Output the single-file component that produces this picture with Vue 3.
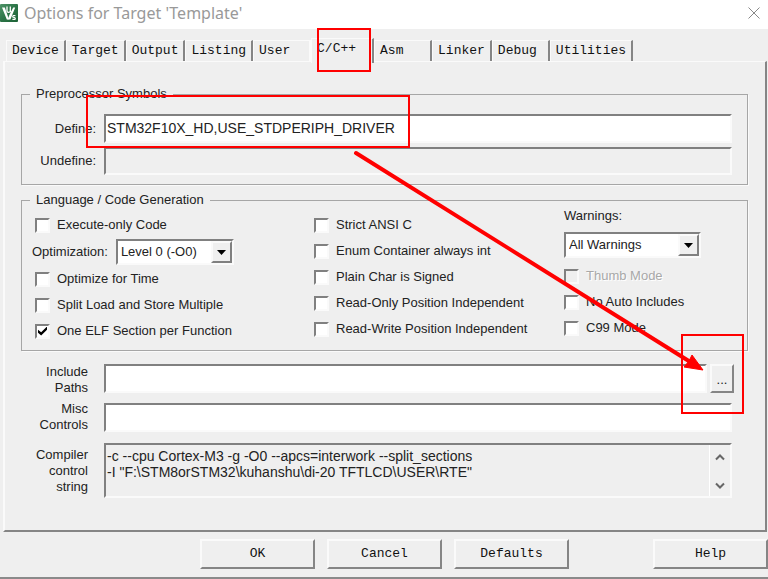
<script setup>
import { ref, reactive } from 'vue'

const tabs = ['Device', 'Target', 'Output', 'Listing', 'User', 'C/C++', 'Asm', 'Linker', 'Debug', 'Utilities']
const active = ref('C/C++')

const defines = ref('STM32F10X_HD,USE_STDPERIPH_DRIVER')
const undefines = ref('')
const optimization = ref('Level 0 (-O0)')
const warnings = ref('All Warnings')
const includePaths = ref('')
const misc = ref('')
const controlString =
  '-c --cpu Cortex-M3 -g -O0 --apcs=interwork --split_sections\n-I "F:\\STM8orSTM32\\kuhanshu\\di-20 TFTLCD\\USER\\RTE"'

const executeOnly = reactive({ label: 'Execute-only Code', on: false })
const codeFlags = reactive([
  { label: 'Optimize for Time', on: false },
  { label: 'Split Load and Store Multiple', on: false },
  { label: 'One ELF Section per Function', on: true },
])
const languageFlags = reactive([
  { label: 'Strict ANSI C', on: false },
  { label: 'Enum Container always int', on: false },
  { label: 'Plain Char is Signed', on: false },
  { label: 'Read-Only Position Independent', on: false },
  { label: 'Read-Write Position Independent', on: false },
])
const modeFlags = reactive([
  { label: 'Thumb Mode', on: false, disabled: true },
  { label: 'No Auto Includes', on: false },
  { label: 'C99 Mode', on: false },
])
</script>

<template>
  <div class="window">
    <header class="titlebar">
      <svg class="logo" viewBox="0 0 18 18" aria-hidden="true">
        <defs>
          <linearGradient id="logo-fill" x1="0" y1="0" x2="1" y2="1">
            <stop offset="0" stop-color="#4f9468" />
            <stop offset="0.5" stop-color="#2c7447" />
            <stop offset="1" stop-color="#1d6236" />
          </linearGradient>
        </defs>
        <rect width="18" height="18" rx="1" fill="url(#logo-fill)" />
        <path d="M2 3.5H4.8L7.6 11.5L8.6 15.5H6.8Z" fill="#fff" />
        <path d="M13.2 3.5H15.2L10.4 15.5H7.6L9.4 11Z" fill="#fff" />
        <path d="M7 2.5V7.2Q7.2 8.4 8.8 8.3Q10.2 8.2 10.3 7V2.5M10.3 6.8L11.2 8" fill="none" stroke="#fff" stroke-width="1.3" />
        <path d="M15.4 11.7H13.2Q12.2 12.7 13.3 13.3L14.8 13.8Q15.8 14.6 14.7 15.4H12.4" fill="none" stroke="#fff" stroke-width="1.2" />
      </svg>
      <h1>Options for Target 'Template'</h1>
      <button class="close" type="button" aria-label="Close">
        <svg viewBox="0 0 12 12"><path d="M0.5 0.5L11.5 11.5M11.5 0.5L0.5 11.5" /></svg>
      </button>
    </header>

    <nav class="tabs" role="tablist">
      <button
        v-for="tab in tabs"
        :key="tab"
        type="button"
        role="tab"
        class="tab"
        :class="{ active: tab === active }"
        :aria-selected="tab === active"
        @click="active = tab"
      >{{ tab }}</button>
    </nav>

    <main class="panel">
      <fieldset class="symbols">
        <legend>Preprocessor Symbols</legend>
        <div class="field">
          <label for="define">Define:</label>
          <input id="define" v-model="defines" class="text" type="text" spellcheck="false" />
        </div>
        <div class="field">
          <label for="undefine">Undefine:</label>
          <input id="undefine" v-model="undefines" class="text muted" type="text" />
        </div>
      </fieldset>

      <fieldset class="codegen">
        <legend>Language / Code Generation</legend>
        <div class="columns">
          <div class="column first">
            <label class="check"><input v-model="executeOnly.on" type="checkbox" />{{ executeOnly.label }}</label>
            <div class="optimization">
              <label for="optimization">Optimization:</label>
              <div class="select level">
                <select id="optimization" v-model="optimization">
                  <option>Level 0 (-O0)</option>
                </select>
                <span class="drop"><svg viewBox="0 0 9 5"><path d="M0 0H9L4.5 5Z" /></svg></span>
              </div>
            </div>
            <label v-for="flag in codeFlags" :key="flag.label" class="check">
              <input v-model="flag.on" type="checkbox" />{{ flag.label }}
            </label>
          </div>

          <div class="column">
            <label v-for="flag in languageFlags" :key="flag.label" class="check">
              <input v-model="flag.on" type="checkbox" />{{ flag.label }}
            </label>
          </div>

          <div class="column last">
            <label for="warnings">Warnings:</label>
            <div class="select warn">
              <select id="warnings" v-model="warnings">
                <option>All Warnings</option>
              </select>
              <span class="drop"><svg viewBox="0 0 9 5"><path d="M0 0H9L4.5 5Z" /></svg></span>
            </div>
            <label v-for="flag in modeFlags" :key="flag.label" class="check" :class="{ disabled: flag.disabled }">
              <input v-model="flag.on" type="checkbox" :disabled="flag.disabled" />{{ flag.label }}
            </label>
          </div>
        </div>
      </fieldset>

      <div class="setting paths">
        <label for="include">Include<br />Paths</label>
        <div class="picker">
          <input id="include" v-model="includePaths" class="text" type="text" />
          <button class="browse" type="button">...</button>
        </div>
      </div>
      <div class="setting">
        <label for="misc">Misc<br />Controls</label>
        <input id="misc" v-model="misc" class="text" type="text" />
      </div>
      <div class="setting compiler">
        <label for="control">Compiler<br />control<br />string</label>
        <div class="output">
          <textarea id="control" readonly spellcheck="false" :value="controlString"></textarea>
          <div class="scroll">
            <button type="button" aria-label="Scroll up"><svg viewBox="0 0 10 8"><path d="M1 6.5L5 2.5L9 6.5" /></svg></button>
            <button type="button" aria-label="Scroll down"><svg viewBox="0 0 10 8"><path d="M1 1.5L5 5.5L9 1.5" /></svg></button>
          </div>
        </div>
      </div>
    </main>

    <footer class="actions">
      <button type="button">OK</button>
      <button type="button">Cancel</button>
      <button type="button">Defaults</button>
      <button type="button" class="help">Help</button>
    </footer>

    <svg class="marks" width="768" height="579" viewBox="0 0 768 579" aria-hidden="true">
      <rect x="318" y="29" width="52" height="42" />
      <rect x="87" y="96" width="322" height="51" />
      <rect x="682" y="335" width="61" height="78" />
      <path class="shaft" d="M356 153L692 363" />
      <path class="head" d="M703 370L692 355L689 361L684 367Z" />
    </svg>
  </div>
</template>

<style>
body {
  margin: 0;
  background: #efefef;
}
</style>

<style scoped>
* {
  box-sizing: border-box;
}

.window {
  position: relative;
  overflow: hidden;
  background: #efefef;
  border-bottom: 2px solid #8a8a8a;
  color: #222;
  font: 13px/16px "Liberation Sans", Arial, sans-serif;
}

button,
input,
select,
textarea {
  margin: 0;
  padding: 0;
  border: 0;
  border-radius: 0;
  background: none;
  color: inherit;
  font: inherit;
}

.titlebar {
  display: flex;
  align-items: center;
  height: 29px;
  padding: 0 8px 4px 0;
  background: #fff;
}

.logo {
  width: 18px;
  height: 18px;
}

h1 {
  flex: 1;
  margin: 0 0 0 6px;
  color: #999;
  font: 16px/24px "Noto Sans", sans-serif;
}

.close {
  display: flex;
}

.close svg {
  width: 12px;
  height: 12px;
  fill: none;
  stroke: #888;
}

.tabs {
  display: flex;
  align-items: flex-end;
  height: 32px;
  padding-left: 6px;
}

.tab {
  min-width: 58px;
  height: 21px;
  padding: 0 5px;
  border: 1px solid #fafafa;
  border-right: 2px solid #858585;
  border-bottom: 0;
  color: #111;
  font: 13px/20px "Liberation Mono", monospace;
  text-align: left;
}

.tab.active {
  position: relative;
  min-width: 63px;
  height: 25px;
  margin-bottom: -2px;
  padding-bottom: 4px;
  background: #efefef;
}

.tab:has(+ .active) {
  border-right-color: #fafafa;
}

.panel {
  margin: 0 1px 0 3px;
  padding: 24px 17px 32px 16px;
  border: 2px solid #fafafa;
  border-top-width: 1px;
  border-right-color: #858585;
  border-bottom-color: #858585;
}

fieldset {
  min-width: 0;
  margin: 0;
  border: 1px solid #a6a6a6;
  box-shadow: 1px 1px #fafafa;
}

legend {
  margin-left: -6px;
  padding: 0 6px;
  font-size: 13px;
}

.symbols {
  display: grid;
  gap: 4px;
  padding: 12px 15px 9px 14px;
}

.field {
  display: grid;
  grid-template-columns: 60px 1fr;
  align-items: center;
  column-gap: 8px;
}

.field label,
.setting label {
  text-align: right;
}

.text {
  width: 100%;
  min-width: 0;
  height: 29px;
  padding: 0 1px 2px;
  border: 2px solid #fafafa;
  border-top-color: #808080;
  border-left-color: #808080;
  background: #fff;
  font-size: 14px;
}

.text.muted {
  height: 28px;
  background: #efefef;
}

.codegen {
  margin-top: 7px;
  padding: 0 10px 6px;
}

.codegen legend {
  margin-left: -2px;
}

.columns {
  display: grid;
  grid-template-columns: 282fr 250fr 173fr;
}

.column {
  display: flex;
  flex-direction: column;
  align-items: flex-start;
  min-width: 0;
  padding-top: 4px;
}

.first .check {
  padding-left: 3px;
}

.last {
  padding-top: 0;
}

.check {
  display: flex;
  align-items: center;
  gap: 7px;
  height: 26px;
  white-space: nowrap;
}

.check.disabled {
  color: #a8a8a8;
  text-shadow: 1px 1px #fff;
}

.check input {
  appearance: none;
  flex: none;
  display: grid;
  place-items: center;
  width: 15px;
  height: 15px;
  border: 2px solid #fafafa;
  border-top-color: #808080;
  border-left-color: #808080;
  background: #fff;
}

.check input:disabled {
  background: #efefef;
}

.check input:checked::before {
  content: "";
  width: 9px;
  height: 9px;
  background: #000;
  clip-path: polygon(0 35%, 35% 65%, 100% 0, 100% 35%, 35% 100%, 0 70%);
}

.optimization {
  display: flex;
  align-items: center;
  gap: 8px;
  height: 28px;
}

.select {
  display: flex;
  height: 26px;
  border: 2px solid #fafafa;
  border-top-color: #808080;
  border-left-color: #808080;
  background: #fff;
}

.select select {
  appearance: none;
  flex: 1;
  padding-left: 3px;
}

.level {
  width: 118px;
}

.warn {
  width: 137px;
  margin: 8px 0 5px;
}

.drop {
  display: grid;
  place-items: center;
  width: 21px;
  border: 2px solid #fafafa;
  border-right-color: #808080;
  border-bottom-color: #808080;
  background: #efefef;
  pointer-events: none;
}

.drop svg {
  width: 9px;
  height: 5px;
}

.setting {
  display: grid;
  grid-template-columns: 67px 1fr;
  align-items: center;
  column-gap: 16px;
  margin-top: 5px;
  padding-right: 16px;
}

.paths {
  align-items: start;
  margin-top: 13px;
  padding-right: 14px;
}

.picker {
  display: flex;
  gap: 3px;
}

.browse {
  flex: none;
  width: 24px;
  height: 29px;
  padding-top: 3px;
}

.compiler {
  margin-top: 10px;
}

.output {
  display: flex;
  height: 55px;
  border: 2px solid #fafafa;
  border-top-color: #808080;
  border-left-color: #808080;
}

.output textarea {
  flex: 1;
  min-width: 0;
  padding: 3px 1px 0;
  overflow: hidden;
  resize: none;
  font-size: 14px;
  white-space: pre;
}

.scroll {
  display: flex;
  flex-direction: column;
  justify-content: space-between;
  width: 21px;
  padding: 8px 0 6px;
  border-left: 1px solid #fff;
}

.scroll button {
  display: flex;
  justify-content: center;
}

.scroll svg {
  width: 10px;
  height: 8px;
  fill: none;
  stroke: #666;
  stroke-width: 2;
}

.browse,
.actions button {
  border: 2px solid #fafafa;
  border-right-color: #858585;
  border-bottom-color: #858585;
}

.actions {
  display: flex;
  gap: 12px;
  margin-top: 7px;
  padding: 0 0 8px 200px;
}

.actions button {
  width: 115px;
  height: 30px;
  color: #111;
  font: 13px/16px "Liberation Mono", monospace;
}

.actions .help {
  margin-left: auto;
}

.marks {
  position: absolute;
  top: 0;
  left: 0;
  fill: none;
  stroke: #f00;
  stroke-width: 2;
  pointer-events: none;
}

.marks .shaft {
  stroke-width: 4;
  stroke-linecap: round;
}

.marks .head {
  fill: #f00;
  stroke-width: 1;
}
</style>
